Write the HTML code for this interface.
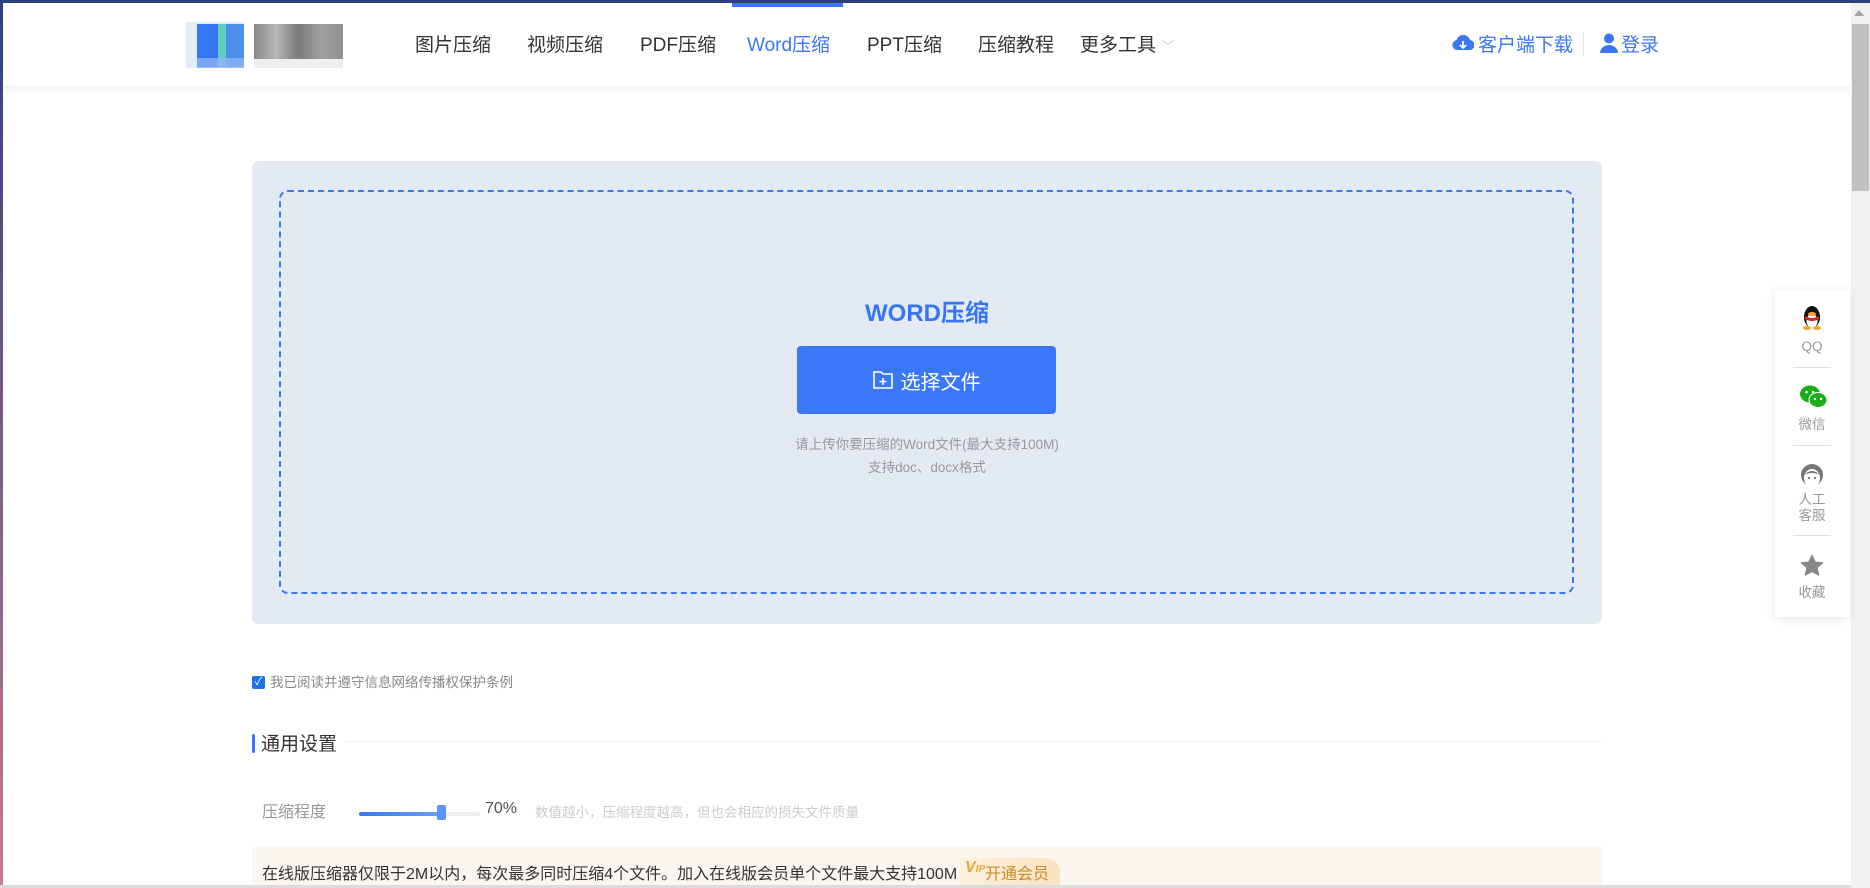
<!DOCTYPE html>
<html><head><meta charset="utf-8"><style>
*{margin:0;padding:0;box-sizing:border-box}
html,body{width:1870px;height:888px;overflow:hidden;background:#fff;font-family:"Liberation Sans","Noto Sans CJK SC",sans-serif}
.abs{position:absolute}
#top{left:0;top:0;width:1870px;height:3px;background:#2e3f7c}
#left{left:0;top:0;width:3px;height:888px;background:linear-gradient(#2e3f7c,#7a5a8a 50%,#c97a8a)}
#hdr{left:3px;top:3px;width:1848px;height:83px;background:#fff;box-shadow:0 3px 6px rgba(0,0,0,.06)}
.nav{top:30px;font-size:19px;color:#333;white-space:nowrap}
#sb{left:1851px;top:3px;width:19px;height:885px;background:#f1f1f1}
#thumb{left:1852px;top:24px;width:17px;height:167px;background:#c1c1c1}
#panel{left:252px;top:161px;width:1350px;height:463px;background:#e4eaf4;border-radius:7px}
#dash{left:279px;top:190px;width:1295px;height:404px;border:2px dashed #3a77f5;border-radius:9px}
#btn{left:797px;top:346px;width:259px;height:68px;background:#3b78f8;border-radius:4px;color:#fff;font-size:20px;display:flex;align-items:center;justify-content:center;gap:8px}
.hint{width:1870px;left:0;text-align:center;font-size:13.5px;color:#999}
#side{left:1775px;top:290px;width:74px;height:327px;background:#fff;box-shadow:0 2px 10px rgba(0,0,0,.1)}
.si{position:absolute;left:0;width:74px;text-align:center;font-size:13.5px;color:#999;line-height:16px}
.sl{position:absolute;left:18px;width:38px;height:1px;background:#ddd}
</style></head><body>
<div class="abs" id="hdr"></div>
<div class="abs" id="top"></div>
<div class="abs" id="left"></div>
<div class="abs" style="left:186px;top:22px;width:58px;height:46px;background:#e3ecfb"></div>
<div class="abs" style="left:197px;top:24px;width:26px;height:43px;background:#3377f5"></div>
<div class="abs" style="left:218px;top:24px;width:8px;height:43px;background:#5ed0c0"></div>
<div class="abs" style="left:226px;top:24px;width:18px;height:43px;background:#4a8ee8"></div>
<div class="abs" style="left:197px;top:58px;width:47px;height:10px;background:#8fb3f5;opacity:.8"></div>
<div class="abs" style="left:254px;top:24px;width:89px;height:35px;background:linear-gradient(90deg,#8a8a8a,#b5b5b5,#7a7a7a,#a0a0a0,#909090)"></div>
<div class="abs" style="left:254px;top:59px;width:89px;height:9px;background:#eee"></div>
<div class="abs nav" style="left:415px">图片压缩</div>
<div class="abs nav" style="left:527px">视频压缩</div>
<div class="abs nav" style="left:640px">PDF压缩</div>
<div class="abs nav" style="left:747px;color:#3a77f5">Word压缩</div>
<div class="abs" style="left:732px;top:3px;width:111px;height:4px;background:#3a77f5"></div>
<div class="abs nav" style="left:867px">PPT压缩</div>
<div class="abs nav" style="left:978px">压缩教程</div>
<div class="abs nav" style="left:1080px">更多工具 <span style="color:#ccc;font-size:13px">﹀</span></div>
<svg class="abs" style="left:1452px;top:34px" width="22" height="18" viewBox="0 0 22 18"><path d="M5 16a5 5 0 0 1-.5-9.9A7 7 0 0 1 18 6a5 5 0 0 1-1 10z" fill="#3a77f5"/><path d="M11 7v7M8 11l3 3 3-3" stroke="#fff" stroke-width="1.8" fill="none"/></svg>
<div class="abs nav" style="left:1478px;color:#3a77f5">客户端下载</div>
<div class="abs" style="left:1583px;top:32px;width:1px;height:24px;background:#e5e5e5"></div>
<svg class="abs" style="left:1600px;top:33px" width="18" height="20" viewBox="0 0 18 20"><circle cx="9" cy="5.5" r="5" fill="#3a77f5"/><path d="M0 20a9 8 0 0 1 18 0z" fill="#3a77f5"/></svg>
<div class="abs nav" style="left:1621px;color:#3a77f5">登录</div>
<div class="abs" id="sb"></div>
<div class="abs" id="thumb"></div>
<div class="abs" style="left:1854px;top:10px;width:0;height:0;border:5px solid transparent;border-bottom:6px solid #a3a3a3;border-top:0"></div>

<div class="abs" id="panel"></div>
<div class="abs" id="dash"></div>
<div class="abs" style="left:0;width:1854px;top:293px;text-align:center;font-size:24px;font-weight:bold;color:#3775f5">WORD压缩</div>
<div class="abs" id="btn"><svg width="20" height="18" viewBox="0 0 20 18"><path d="M1 1h7l2 2h9v14H1z" fill="none" stroke="#fff" stroke-width="1.6"/><path d="M10 7v7M6.5 10.5h7" stroke="#fff" stroke-width="1.6"/></svg>选择文件</div>
<div class="abs hint" style="left:-8px;top:433px">请上传你要压缩的Word文件(最大支持100M)</div>
<div class="abs hint" style="left:-8px;top:456px">支持doc、docx格式</div>

<div class="abs" style="left:252px;top:676px;width:13px;height:13px;background:#1a73e8;border-radius:2px;color:#fff;font-size:11px;line-height:13px;text-align:center">✓</div>
<div class="abs" style="left:270px;top:671px;font-size:13.5px;color:#888">我已阅读并遵守信息网络传播权保护条例</div>
<div class="abs" style="left:252px;top:734px;width:3px;height:19px;background:#3a77f5;border-radius:2px"></div>
<div class="abs" style="left:261px;top:729px;font-size:19px;color:#333">通用设置</div>
<div class="abs" style="left:346px;top:741px;width:1256px;height:1px;background:#eee"></div>
<div class="abs" style="left:262px;top:798px;font-size:16px;color:#999">压缩程度</div>
<div class="abs" style="left:359px;top:812px;width:121px;height:4px;background:#eee;border-radius:2px"></div>
<div class="abs" style="left:359px;top:812px;width:82px;height:4px;background:linear-gradient(90deg,#3a77f5,#6aa0ff);border-radius:2px"></div>
<div class="abs" style="left:437px;top:805px;width:9px;height:15px;background:#5b95fb;border-radius:2px"></div>
<div class="abs" style="left:485px;top:800px;font-size:16px;color:#555">70%</div>
<div class="abs" style="left:535px;top:801px;font-size:13.5px;color:#ccc">数值越小，压缩程度越高，但也会相应的损失文件质量</div>
<div class="abs" style="left:252px;top:847px;width:1350px;height:41px;background:#fbf6f0"></div>
<div class="abs" style="left:262px;top:860px;font-size:16px;color:#333">在线版压缩器仅限于2M以内，每次最多同时压缩4个文件。加入在线版会员单个文件最大支持100M</div>
<div class="abs" style="left:960px;top:858px;width:100px;height:30px;background:linear-gradient(90deg,#fdf0dc,#fbe3c0);border-radius:0 14px 0 0"></div>
<div class="abs" style="left:965px;top:859px;font-size:16px;font-style:italic;font-weight:bold;color:#e8a93c">V<span style="font-size:10px">IP</span></div>
<div class="abs" style="left:985px;top:860px;font-size:16px;color:#c98a2c">开通会员</div>
<div class="abs" style="left:0;top:885px;width:1851px;height:3px;background:#dcdcdc"></div>

<div class="abs" id="side">
<svg style="position:absolute;left:26px;top:14px" width="22" height="26" viewBox="0 0 22 26"><ellipse cx="11" cy="13" rx="8" ry="11" fill="#111"/><ellipse cx="11" cy="17" rx="5.5" ry="7" fill="#fff"/><path d="M4 12q7 4 14 0l0 3q-7 4-14 0z" fill="#e02020"/><ellipse cx="11" cy="10" rx="4" ry="2" fill="#f5a623"/><ellipse cx="6" cy="24" rx="4" ry="2" fill="#f5a623"/><ellipse cx="16" cy="24" rx="4" ry="2" fill="#f5a623"/></svg>
<div class="si" style="top:49px">QQ</div>
<div class="sl" style="top:77px"></div>
<svg style="position:absolute;left:24px;top:95px" width="29" height="24" viewBox="0 0 29 24"><ellipse cx="11" cy="9" rx="10" ry="8.5" fill="#1aad19"/><ellipse cx="19" cy="15" rx="9" ry="7.5" fill="#1aad19" stroke="#fff" stroke-width="1"/><circle cx="7.5" cy="7" r="1.3" fill="#fff"/><circle cx="14" cy="7" r="1.3" fill="#fff"/><circle cx="16" cy="14" r="1.2" fill="#fff"/><circle cx="22" cy="14" r="1.2" fill="#fff"/></svg>
<div class="si" style="top:127px">微信</div>
<div class="sl" style="top:155px"></div>
<svg style="position:absolute;left:25px;top:173px" width="24" height="26" viewBox="0 0 24 26"><circle cx="12" cy="12" r="11" fill="#777"/><ellipse cx="12" cy="15" rx="8" ry="9" fill="#fff"/><path d="M4 12q8-8 16 0q-8-4-16 0z" fill="#777"/><circle cx="9" cy="15" r="1" fill="#555"/><circle cx="15" cy="15" r="1" fill="#555"/></svg>
<div class="si" style="top:202px">人工<br>客服</div>
<div class="sl" style="top:245px"></div>
<svg style="position:absolute;left:25px;top:264px" width="24" height="23" viewBox="0 0 24 23"><path d="M12 1l3.3 7 7.5.8-5.6 5 1.6 7.5L12 17.6 5.2 21.3l1.6-7.5-5.6-5 7.5-.8z" fill="#888" stroke="#888" stroke-linejoin="round"/></svg>
<div class="si" style="top:295px">收藏</div>
</div>
</body></html>
